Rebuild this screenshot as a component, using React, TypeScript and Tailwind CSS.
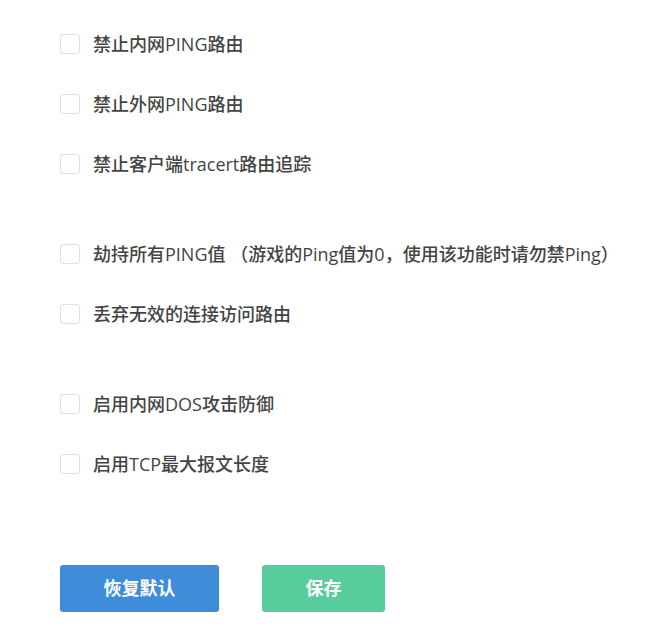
import { useState } from "react";

type Item = { id: string; label: string };

const groups: Item[][] = [
  [
    { id: "lanPing", label: "禁止内网PING路由" },
    { id: "wanPing", label: "禁止外网PING路由" },
    { id: "tracert", label: "禁止客户端tracert路由追踪" },
  ],
  [
    { id: "hijack", label: "劫持所有PING值 （游戏的Ping值为0，使用该功能时请勿禁Ping）" },
    { id: "drop", label: "丢弃无效的连接访问路由" },
  ],
  [
    { id: "dos", label: "启用内网DOS攻击防御" },
    { id: "mss", label: "启用TCP最大报文长度" },
  ],
];

const CheckRow = ({
  item,
  checked,
  onToggle,
}: {
  item: Item;
  checked: boolean;
  onToggle: (id: string) => void;
}) => (
  <label className="flex items-center h-[20px] cursor-pointer select-none">
    <span
      onClick={() => onToggle(item.id)}
      className={`w-[20px] h-[20px] rounded-[3px] border shrink-0 ${
        checked ? "bg-[#3f8cd8] border-[#3f8cd8]" : "bg-white border-[#dcdfe6]"
      }`}
    />
    <span className="ml-[13px] text-[18px] leading-[20px] text-[#444] font-medium whitespace-nowrap">
      {item.label}
    </span>
  </label>
);

export default function App() {
  const [checked, setChecked] = useState<Record<string, boolean>>({});

  const toggle = (id: string) =>
    setChecked((prev) => ({ ...prev, [id]: !prev[id] }));

  return (
    <main
      className="min-h-screen bg-white pl-[60px] pt-[34px]"
      style={{ fontFamily: '"Open Sans", "Noto Sans CJK SC", sans-serif' }}
    >
      <div className="flex flex-col gap-[70px]">
        {groups.map((group, i) => (
          <div key={i} className="flex flex-col gap-[40px]">
            {group.map((item) => (
              <CheckRow
                key={item.id}
                item={item}
                checked={!!checked[item.id]}
                onToggle={toggle}
              />
            ))}
          </div>
        ))}
      </div>

      <div className="flex gap-[43px] mt-[91px]">
        <button className="w-[159px] h-[47px] rounded-[3px] bg-[#3f8cd8] text-white text-[18px] font-bold">
          恢复默认
        </button>
        <button className="w-[123px] h-[47px] rounded-[3px] bg-[#59cc9e] text-white text-[18px] font-bold">
          保存
        </button>
      </div>
    </main>
  );
}
